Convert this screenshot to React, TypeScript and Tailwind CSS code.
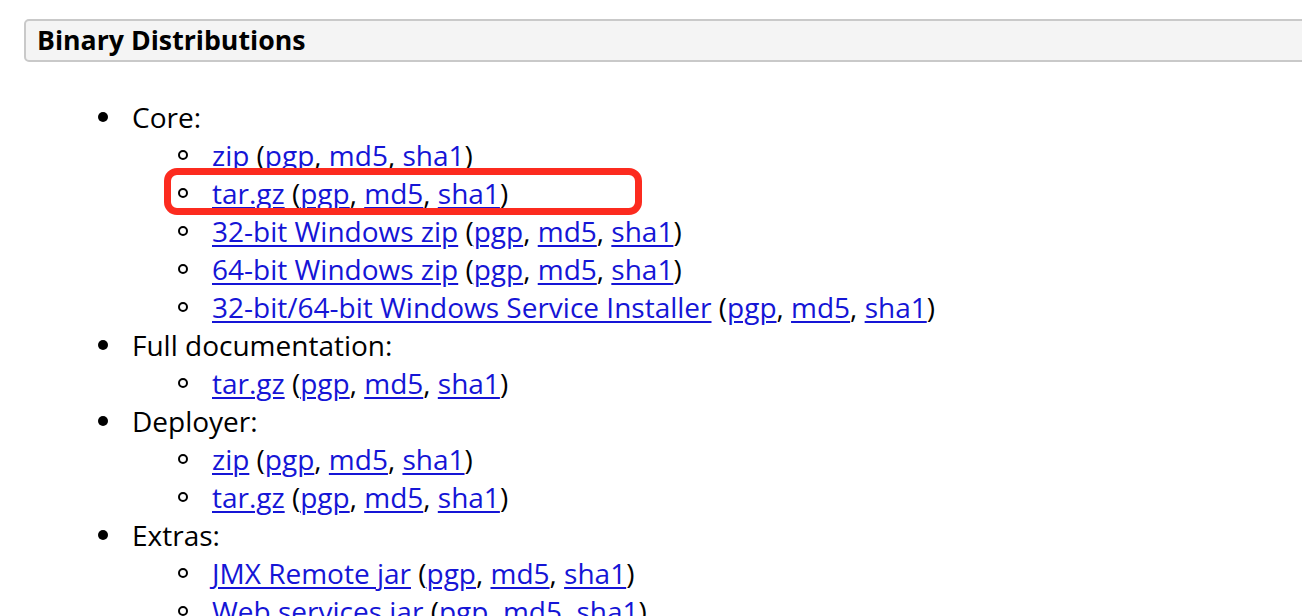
import { FC } from 'react';

type Sub = { label: string; highlight?: boolean };
type Group = { title: string; items: Sub[] };

const groups: Group[] = [
  {
    title: 'Core:',
    items: [
      { label: 'zip' },
      { label: 'tar.gz', highlight: true },
      { label: '32-bit Windows zip' },
      { label: '64-bit Windows zip' },
      { label: '32-bit/64-bit Windows Service Installer' },
    ],
  },
  { title: 'Full documentation:', items: [{ label: 'tar.gz' }] },
  { title: 'Deployer:', items: [{ label: 'zip' }, { label: 'tar.gz' }] },
  { title: 'Extras:', items: [{ label: 'JMX Remote jar' }, { label: 'Web services jar' }] },
];

const Link: FC<{ children: string }> = ({ children }) => (
  <a href="#" className="text-[#1515d6] underline decoration-[1.5px] underline-offset-[3px]">
    {children}
  </a>
);

const SubItem: FC<{ item: Sub }> = ({ item }) => (
  <li className="relative flex h-[38px] items-center">
    {/* hollow bullet */}
    <span className="ml-[178px] h-[10px] w-[10px] shrink-0 rounded-full border-2 border-black" />
    <span className="ml-[24px] whitespace-nowrap">
      <Link>{item.label}</Link> (<Link>pgp</Link>, <Link>md5</Link>, <Link>sha1</Link>)
    </span>
    {item.highlight && (
      <span className="pointer-events-none absolute left-[164px] top-[-6px] h-[47px] w-[478px] rounded-[13px] border-[7px] border-[#fc2b1f]" />
    )}
  </li>
);

export default function App() {
  return (
    <div
      className="h-[616px] w-[1302px] overflow-hidden bg-white text-black"
      style={{ fontFamily: '"Open Sans", "Noto Sans", sans-serif' }}
    >
      <div className="ml-[24px] mt-[19px] flex h-[43px] w-[1300px] items-center rounded-[5px] border-2 border-[#c9c9c9] bg-[#f4f4f4] pl-[11px]">
        <h3 className="text-[26.7px] font-bold leading-none">Binary Distributions</h3>
      </div>

      <ul className="mt-[36px] text-[28px] leading-[38px]">
        {groups.map(g => (
          <li key={g.title}>
            <div className="flex h-[38px] items-center">
              <span className="ml-[98px] h-[10px] w-[10px] shrink-0 rounded-full bg-black" />
              <span className="ml-[24px]">{g.title}</span>
            </div>
            <ul>
              {g.items.map((it, i) => (
                <SubItem key={i} item={it} />
              ))}
            </ul>
          </li>
        ))}
      </ul>
    </div>
  );
}
